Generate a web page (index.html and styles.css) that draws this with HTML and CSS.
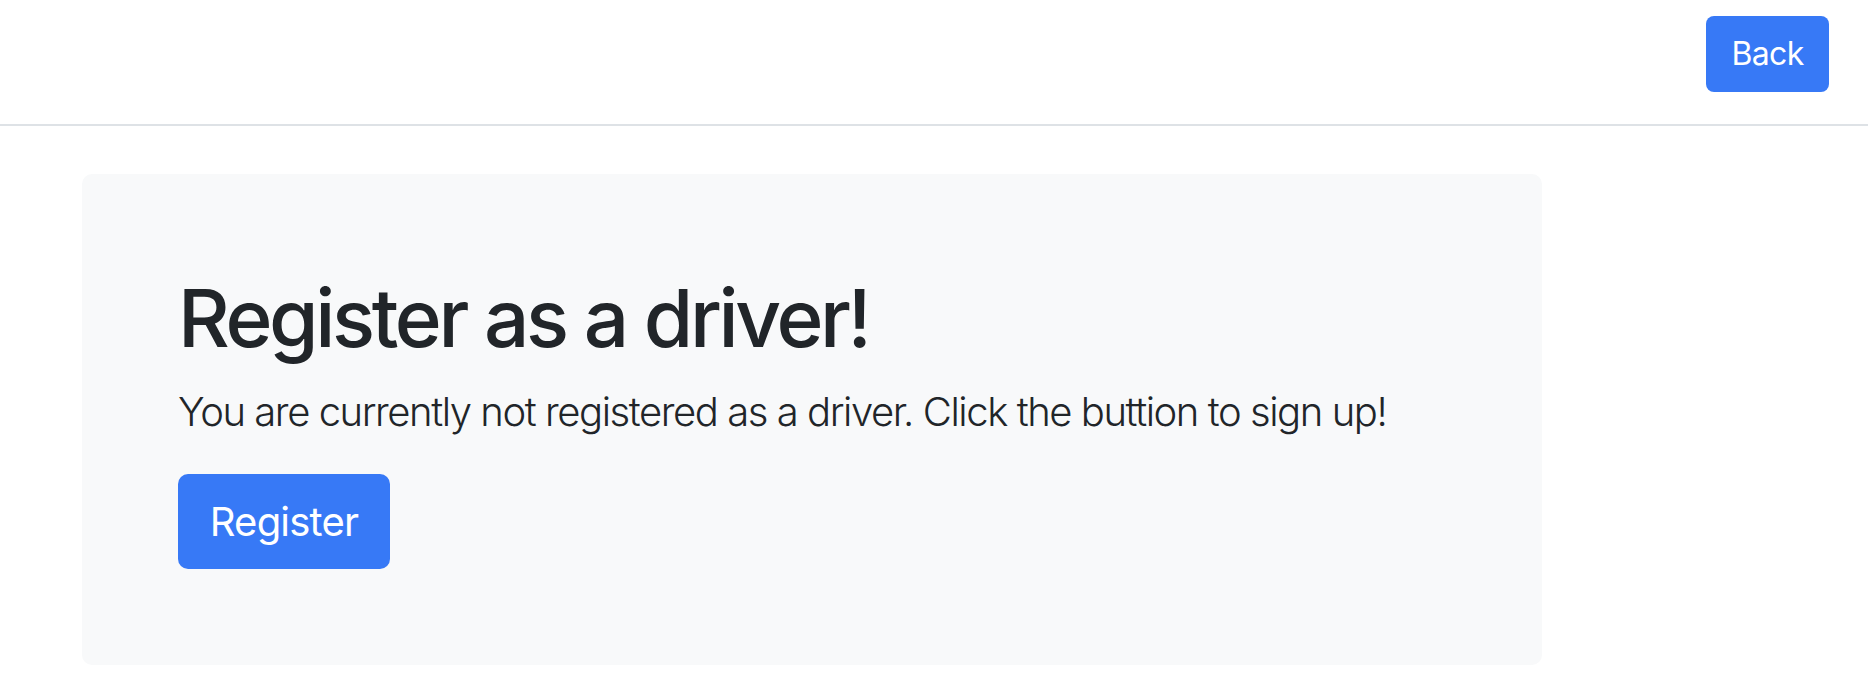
FILE: index.html
```html
<!DOCTYPE html>
<html lang="en">
<head>
<meta charset="utf-8">
<title>Register as a driver</title>
<link rel="stylesheet" href="styles.css">
</head>
<body>
<nav class="navbar">
  <button class="btn btn-back">Back</button>
</nav>
<main class="container">
  <section class="jumbotron">
    <h1 class="title">Register as a driver!</h1>
    <p class="lead">You are currently not registered as a driver. Click the buttion to sign up!</p>
    <button class="btn btn-lg">Register</button>
  </section>
</main>
</body>
</html>
```
FILE: styles.css
```css
html, body {
  margin: 0;
  padding: 0;
  background: #ffffff;
}
body {
  font-family: Inter, "Noto Sans", "Liberation Sans", sans-serif;
  color: #212529;
}
.navbar {
  display: flex;
  justify-content: flex-end;
  align-items: flex-start;
  height: 126px;
  box-sizing: border-box;
  padding: 16px 39px 0 0;
  border-bottom: 2px solid #dee2e6;
}
.btn {
  font-family: inherit;
  border: none;
  background: #3779f6;
  color: #ffffff;
  cursor: pointer;
  margin: 0;
  letter-spacing: -0.02em;
}
.btn-back {
  height: 76px;
  width: 123px;
  padding: 0;
  font-size: 32px;
  line-height: 48px;
  border-radius: 8px;
}
.container {
  padding: 48px 0 0 82px;
}
.jumbotron {
  width: 1460px;
  box-sizing: border-box;
  padding: 96px;
  background: #f8f9fa;
  border-radius: 10px;
}
.title {
  margin: 0 0 16px;
  font-size: 80px;
  font-weight: 500;
  line-height: 1.2;
  letter-spacing: -0.042em;
}
.lead {
  margin: 0 0 32px;
  font-size: 40px;
  font-weight: 300;
  line-height: 1.5;
  letter-spacing: -0.036em;
  white-space: nowrap;
}
.btn-lg {
  height: 95px;
  width: 212px;
  padding: 0;
  font-size: 40px;
  line-height: 60px;
  border-radius: 10px;
}
```
